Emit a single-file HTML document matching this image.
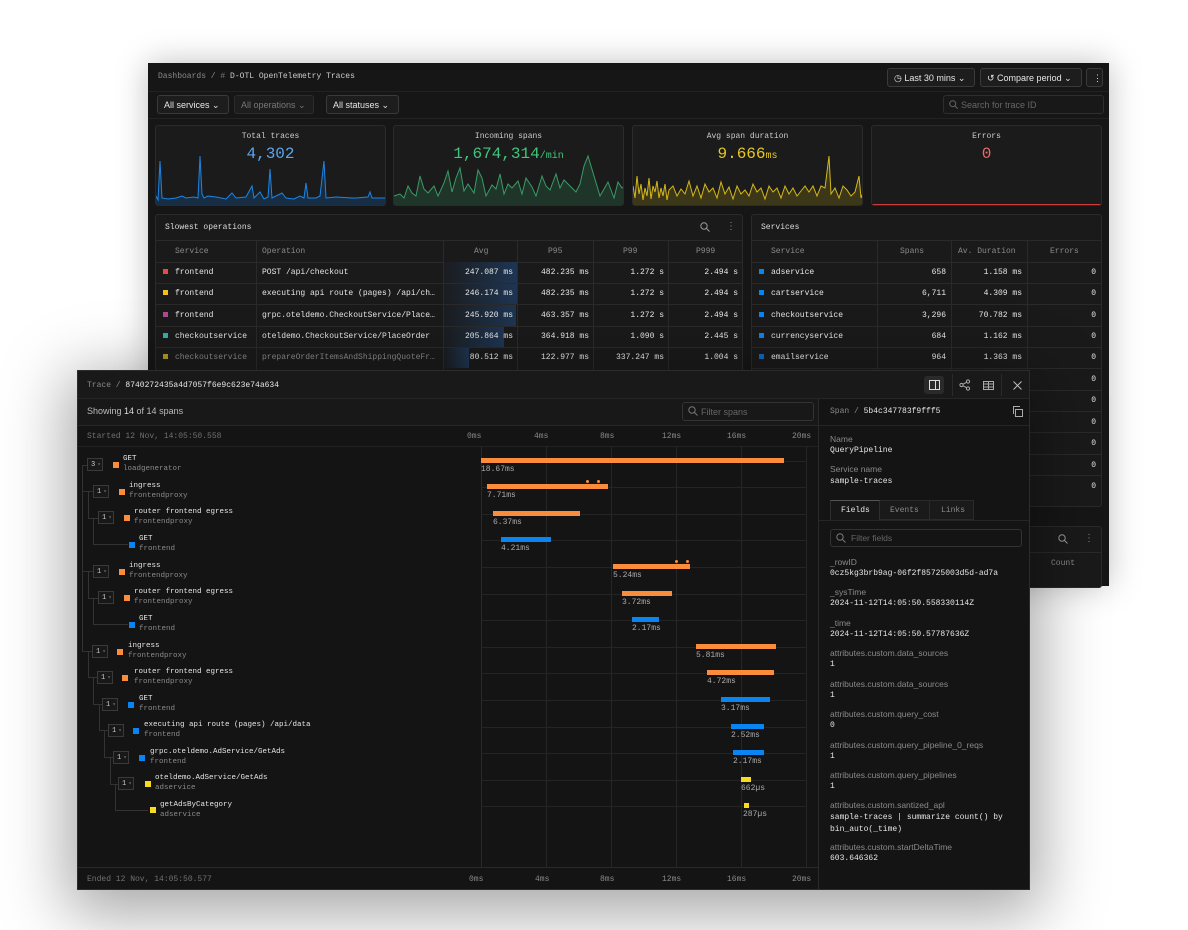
<!DOCTYPE html>
<html><head><meta charset="utf-8">
<style>
*{box-sizing:border-box;margin:0;padding:0}
body{width:1188px;height:930px;background:#fff;position:relative;overflow:hidden;font-family:"Liberation Mono",monospace;color:#d8d8d8}
.a{position:absolute;white-space:nowrap}
.m{font-family:"Liberation Mono",monospace;font-size:8px}
.s{font-family:"Liberation Sans",sans-serif}
.g{color:#8a8a8a}
.w{color:#e6e6e6}
.bk{position:absolute;left:148px;top:63px;width:961px;height:523px;background:#161616;box-shadow:0 0 30px rgba(0,0,0,.25)}
.card{position:absolute;top:125px;height:81px;width:231px;background:#1b1b1b;border:1px solid #2b2b2b;border-radius:3px;overflow:hidden}
.btn{position:absolute;height:19px;border:1px solid #3a3a3a;border-radius:3px;background:#1d1d1d;font-family:"Liberation Sans",sans-serif;font-size:9px;color:#e6e6e6;padding:4px 6px;white-space:nowrap}
.panel{position:absolute;background:#1a1a1a;border:1px solid #2a2a2a;border-radius:3px;overflow:hidden}
.hl{position:absolute;height:1px;background:#2a2a2a}
.vl{position:absolute;width:1px;background:#2a2a2a}
.sq{position:absolute;width:5px;height:5px}
.fg{position:absolute;left:77px;top:370px;width:953px;height:520px;background:#141414;box-shadow:0 14px 60px 10px rgba(0,0,0,.35);border:1px solid #2c2c2c}
.box{position:absolute;width:16px;height:13px;border:1px solid #3a3a3a;background:#181818;font-size:7px;color:#ccc;padding:2px 0 0 3px}
.box:after{content:"▾";color:#666;font-size:6px;margin-left:2px}
.bar{position:absolute;height:5px}
.O{background:#fb8c3c}.B{background:#0a84f0}.Y{background:#f7dc1e}
.tv{position:absolute;width:1px;background:#262626;top:446px;height:422px}
.th{position:absolute;height:1px;background:#242424;left:481px;width:326px}
.ln{position:absolute;background:#333}
</style></head><body>

<div class="bk"></div>
<div class="a m g" style="left:158px;top:72px">Dashboards / <span style="color:#777">#</span> <span class="w" style="color:#ccc">D-OTL OpenTelemetry Traces</span></div>
<div class="btn" style="left:887px;top:68px;width:88px">◷ Last 30 mins ⌄</div>
<div class="btn" style="left:980px;top:68px;width:102px">↺ Compare period ⌄</div>
<div class="btn" style="left:1086px;top:68px;width:17px;padding:4px 6px">⋮</div>
<div class="hl" style="left:148px;top:91px;width:961px;background:#222"></div>
<div class="btn" style="left:157px;top:95px;width:72px">All services ⌄</div>
<div class="btn" style="left:234px;top:95px;width:80px;color:#777;border-color:#2c2c2c">All operations ⌄</div>
<div class="btn" style="left:326px;top:95px;width:73px">All statuses ⌄</div>
<div class="btn" style="left:943px;top:95px;width:161px;color:#666;border-color:#2e2e2e;background:#181818;padding-left:17px">Search for trace ID</div>
<svg class="a" style="left:949px;top:100px" width="9" height="9" fill="none" stroke="#666"><circle cx="3.7" cy="3.7" r="3"/><path d="M6 6L8.7 8.7"/></svg>
<div class="hl" style="left:148px;top:118px;width:961px;background:#222"></div>

<div class="card" style="left:155px">
 <div class="a m w" style="left:0;width:229px;text-align:center;top:6px;color:#ccc">Total traces</div>
 <div class="a m" style="left:0;width:229px;text-align:center;top:19px;font-size:16px;color:#5aa6ee">4,302</div>
 <svg class="a" style="left:0;top:0" width="231" height="81" viewBox="0 0 231 81"><polygon fill="rgba(10,120,230,.2)" points="0,81 0,70 2,74 4,35 6,72 12,73 20,72 26,70 30,72 38,71 42,72 44,30 46,68 48,72 52,70 60,71 70,73 76,67 80,72 90,71 96,60 98,72 104,66 108,73 112,71 114,43 116,72 126,67 130,72 138,73 144,70 148,72 150,57 152,72 160,72 164,70 168,35 170,72 180,71 196,72 200,72 212,71 214,66 216,72 231,72 231,81"/><polyline fill="none" stroke="#1b86e8" stroke-width="1" points="0,70 2,74 4,35 6,72 12,73 20,72 26,70 30,72 38,71 42,72 44,30 46,68 48,72 52,70 60,71 70,73 76,67 80,72 90,71 96,60 98,72 104,66 108,73 112,71 114,43 116,72 126,67 130,72 138,73 144,70 148,72 150,57 152,72 160,72 164,70 168,35 170,72 180,71 196,72 200,72 212,71 214,66 216,72 231,72"/></svg>
</div>
<div class="card" style="left:393px">
 <div class="a m" style="left:0;width:229px;text-align:center;top:6px;color:#ccc">Incoming spans</div>
 <div class="a m" style="left:0;width:229px;text-align:center;top:19px;font-size:16px;color:#3ec77a">1,674,314<span style="font-size:10px">/min</span></div>
 <svg class="a" style="left:0;top:0" width="231" height="81" viewBox="0 0 231 81"><polygon fill="rgba(50,160,100,.2)" points="0,81 0,70 6,68 10,72 14,60 18,67 22,70 26,50 30,63 34,67 40,60 44,70 50,57 54,45 58,66 62,52 66,42 70,65 74,58 80,67 84,44 88,52 92,70 98,59 102,63 106,48 110,68 114,58 118,62 124,55 128,68 132,52 138,61 142,70 148,50 152,60 156,64 162,48 166,62 170,54 176,60 182,66 186,58 190,40 194,30 200,50 206,70 210,63 214,56 220,72 224,56 228,62 231,60 231,81"/><polyline fill="none" stroke="#3a9b66" stroke-width="1" points="0,70 6,68 10,72 14,60 18,67 22,70 26,50 30,63 34,67 40,60 44,70 50,57 54,45 58,66 62,52 66,42 70,65 74,58 80,67 84,44 88,52 92,70 98,59 102,63 106,48 110,68 114,58 118,62 124,55 128,68 132,52 138,61 142,70 148,50 152,60 156,64 162,48 166,62 170,54 176,60 182,66 186,58 190,40 194,30 200,50 206,70 210,63 214,56 220,72 224,56 228,62 231,60"/></svg>
</div>
<div class="card" style="left:632px">
 <div class="a m" style="left:0;width:229px;text-align:center;top:6px;color:#ccc">Avg span duration</div>
 <div class="a m" style="left:0;width:229px;text-align:center;top:19px;font-size:16px;color:#e8c820">9.666<span style="font-size:10px">ms</span></div>
 <svg class="a" style="left:0;top:0" width="231" height="81" viewBox="0 0 231 81"><polygon fill="rgba(200,170,20,.2)" points="0,81 0,60 2,72 4,50 6,68 8,58 10,74 12,62 14,70 16,52 18,73 20,60 22,66 24,55 26,72 28,62 30,70 32,58 34,74 36,64 40,60 44,70 48,63 52,68 56,55 60,70 64,60 68,72 72,58 76,66 80,62 84,72 88,56 92,68 96,61 100,73 104,60 108,68 112,64 116,70 120,58 124,66 128,62 132,73 136,60 140,66 144,62 148,72 152,60 156,68 160,62 164,70 168,65 172,60 176,66 180,60 184,70 188,60 192,62 196,30 198,68 202,62 206,72 210,60 214,64 218,70 222,66 226,50 228,72 231,64 231,81"/><polyline fill="none" stroke="#d4b81c" stroke-width="1" points="0,60 2,72 4,50 6,68 8,58 10,74 12,62 14,70 16,52 18,73 20,60 22,66 24,55 26,72 28,62 30,70 32,58 34,74 36,64 40,60 44,70 48,63 52,68 56,55 60,70 64,60 68,72 72,58 76,66 80,62 84,72 88,56 92,68 96,61 100,73 104,60 108,68 112,64 116,70 120,58 124,66 128,62 132,73 136,60 140,66 144,62 148,72 152,60 156,68 160,62 164,70 168,65 172,60 176,66 180,60 184,70 188,60 192,62 196,30 198,68 202,62 206,72 210,60 214,64 218,70 222,66 226,50 228,72 231,64"/></svg>
</div>
<div class="card" style="left:871px">
 <div class="a m" style="left:0;width:229px;text-align:center;top:6px;color:#ccc">Errors</div>
 <div class="a m" style="left:0;width:229px;text-align:center;top:19px;font-size:16px;color:#ef6a6a">0</div>
 <div class="a" style="left:0;top:78px;width:231px;height:2px;background:#d23a3a"></div>
</div>

<div class="panel" style="left:155px;top:214px;width:588px;height:160px"></div>
<div class="a m w" style="left:165px;top:223px;color:#ddd">Slowest operations</div>
<svg class="a" style="left:700px;top:222px" width="10" height="10" fill="none" stroke="#999"><circle cx="4" cy="4" r="3.2"/><path d="M6.4 6.4L9.5 9.5"/></svg>
<div class="a m g" style="left:726px;top:221px;font-size:10px">⋮</div>
<div class="hl" style="left:156px;top:240px;width:586px"></div>
<div class="hl" style="left:156px;top:262px;width:586px"></div>
<div class="vl" style="left:256px;top:240px;height:130px"></div>
<div class="vl" style="left:443px;top:240px;height:130px"></div>
<div class="vl" style="left:517px;top:240px;height:130px"></div>
<div class="vl" style="left:593px;top:240px;height:130px"></div>
<div class="vl" style="left:668px;top:240px;height:130px"></div>
<div class="a m g" style="left:175px;top:247px">Service</div>
<div class="a m g" style="left:262px;top:247px">Operation</div>
<div class="a m g" style="left:474px;top:247px">Avg</div>
<div class="a m g" style="left:548px;top:247px">P95</div>
<div class="a m g" style="left:623px;top:247px">P99</div>
<div class="a m g" style="left:696px;top:247px">P999</div>
<div class="a" style="left:444px;top:262px;width:73px;height:21px;background:linear-gradient(90deg,#1b1d20,#1e3552)"></div>
<div class="a" style="left:444px;top:283px;width:73px;height:21px;background:linear-gradient(90deg,#1b1d20,#1e3552)"></div>
<div class="a" style="left:444px;top:304px;width:72px;height:22px;background:linear-gradient(90deg,#1b1d20,#1e3552)"></div>
<div class="a" style="left:444px;top:326px;width:60px;height:21px;background:linear-gradient(90deg,#1b1d20,#1e3552)"></div>
<div class="a" style="left:444px;top:347px;width:25px;height:21px;background:linear-gradient(90deg,#1b1d20,#1e3552)"></div>
<div class="hl" style="left:156px;top:283px;width:586px"></div>
<div class="hl" style="left:156px;top:304px;width:586px"></div>
<div class="hl" style="left:156px;top:326px;width:586px"></div>
<div class="hl" style="left:156px;top:347px;width:586px"></div>
<div class="sq" style="left:163px;top:269px;background:#e84a4a"></div>
<div class="sq" style="left:163px;top:290px;background:#f0c020"></div>
<div class="sq" style="left:163px;top:312px;background:#b04890"></div>
<div class="sq" style="left:163px;top:333px;background:#30b0b0"></div>
<div class="sq" style="left:163px;top:354px;background:#b09a20"></div>
<div class="a m w" style="left:175px;top:268px">frontend</div>
<div class="a m w" style="left:175px;top:289px">frontend</div>
<div class="a m w" style="left:175px;top:311px">frontend</div>
<div class="a m w" style="left:175px;top:332px">checkoutservice</div>
<div class="a m g" style="left:175px;top:353px">checkoutservice</div>
<div class="a m w" style="left:262px;top:268px">POST /api/checkout</div>
<div class="a m w" style="left:262px;top:289px">executing api route (pages) /api/ch…</div>
<div class="a m w" style="left:262px;top:311px">grpc.oteldemo.CheckoutService/Place…</div>
<div class="a m w" style="left:262px;top:332px">oteldemo.CheckoutService/PlaceOrder</div>
<div class="a m g" style="left:262px;top:353px">prepareOrderItemsAndShippingQuoteFr…</div>
<div class="a m w" style="left:444px;width:69px;text-align:right;top:268px">247.087 ms</div>
<div class="a m w" style="left:444px;width:69px;text-align:right;top:289px">246.174 ms</div>
<div class="a m w" style="left:444px;width:69px;text-align:right;top:311px">245.920 ms</div>
<div class="a m w" style="left:444px;width:69px;text-align:right;top:332px">205.864 ms</div>
<div class="a m w" style="left:444px;width:69px;text-align:right;top:353px">80.512 ms</div>
<div class="a m w" style="left:518px;width:71px;text-align:right;top:268px">482.235 ms</div>
<div class="a m w" style="left:518px;width:71px;text-align:right;top:289px">482.235 ms</div>
<div class="a m w" style="left:518px;width:71px;text-align:right;top:311px">463.357 ms</div>
<div class="a m w" style="left:518px;width:71px;text-align:right;top:332px">364.918 ms</div>
<div class="a m w" style="left:518px;width:71px;text-align:right;top:353px">122.977 ms</div>
<div class="a m w" style="left:594px;width:70px;text-align:right;top:268px">1.272 s</div>
<div class="a m w" style="left:594px;width:70px;text-align:right;top:289px">1.272 s</div>
<div class="a m w" style="left:594px;width:70px;text-align:right;top:311px">1.272 s</div>
<div class="a m w" style="left:594px;width:70px;text-align:right;top:332px">1.090 s</div>
<div class="a m w" style="left:594px;width:70px;text-align:right;top:353px">337.247 ms</div>
<div class="a m w" style="left:669px;width:69px;text-align:right;top:268px">2.494 s</div>
<div class="a m w" style="left:669px;width:69px;text-align:right;top:289px">2.494 s</div>
<div class="a m w" style="left:669px;width:69px;text-align:right;top:311px">2.494 s</div>
<div class="a m w" style="left:669px;width:69px;text-align:right;top:332px">2.445 s</div>
<div class="a m w" style="left:669px;width:69px;text-align:right;top:353px">1.004 s</div>

<div class="panel" style="left:751px;top:214px;width:351px;height:293px"></div>
<div class="a m w" style="left:761px;top:223px;color:#ddd">Services</div>
<div class="hl" style="left:752px;top:240px;width:349px"></div>
<div class="hl" style="left:752px;top:262px;width:349px"></div>
<div class="vl" style="left:877px;top:240px;height:267px"></div>
<div class="vl" style="left:951px;top:240px;height:267px"></div>
<div class="vl" style="left:1027px;top:240px;height:267px"></div>
<div class="a m g" style="left:771px;top:247px">Service</div>
<div class="a m g" style="left:900px;top:247px">Spans</div>
<div class="a m g" style="left:958px;top:247px">Av. Duration</div>
<div class="a m g" style="left:1050px;top:247px">Errors</div>
<div class="hl" style="left:752px;top:283px;width:349px"></div>
<div class="hl" style="left:752px;top:304px;width:349px"></div>
<div class="hl" style="left:752px;top:326px;width:349px"></div>
<div class="hl" style="left:752px;top:347px;width:349px"></div>
<div class="hl" style="left:752px;top:368px;width:349px"></div>
<div class="hl" style="left:752px;top:390px;width:349px"></div>
<div class="hl" style="left:752px;top:411px;width:349px"></div>
<div class="hl" style="left:752px;top:432px;width:349px"></div>
<div class="hl" style="left:752px;top:454px;width:349px"></div>
<div class="hl" style="left:752px;top:475px;width:349px"></div>
<div class="sq" style="left:759px;top:269px;background:#0a84f0"></div>
<div class="sq" style="left:759px;top:290px;background:#0a84f0"></div>
<div class="sq" style="left:759px;top:312px;background:#0a84f0"></div>
<div class="sq" style="left:759px;top:333px;background:#0a84f0"></div>
<div class="sq" style="left:759px;top:354px;background:#0a6ac0"></div>
<div class="a m w" style="left:771px;top:268px">adservice</div>
<div class="a m w" style="left:771px;top:289px">cartservice</div>
<div class="a m w" style="left:771px;top:311px">checkoutservice</div>
<div class="a m w" style="left:771px;top:332px">currencyservice</div>
<div class="a m w" style="left:771px;top:353px">emailservice</div>
<div class="a m w" style="left:878px;width:68px;text-align:right;top:268px">658</div>
<div class="a m w" style="left:878px;width:68px;text-align:right;top:289px">6,711</div>
<div class="a m w" style="left:878px;width:68px;text-align:right;top:311px">3,296</div>
<div class="a m w" style="left:878px;width:68px;text-align:right;top:332px">684</div>
<div class="a m w" style="left:878px;width:68px;text-align:right;top:353px">964</div>
<div class="a m w" style="left:952px;width:70px;text-align:right;top:268px">1.158 ms</div>
<div class="a m w" style="left:952px;width:70px;text-align:right;top:289px">4.309 ms</div>
<div class="a m w" style="left:952px;width:70px;text-align:right;top:311px">70.782 ms</div>
<div class="a m w" style="left:952px;width:70px;text-align:right;top:332px">1.162 ms</div>
<div class="a m w" style="left:952px;width:70px;text-align:right;top:353px">1.363 ms</div>
<div class="a m w" style="left:1028px;width:68px;text-align:right;top:268px">0</div>
<div class="a m w" style="left:1028px;width:68px;text-align:right;top:289px">0</div>
<div class="a m w" style="left:1028px;width:68px;text-align:right;top:311px">0</div>
<div class="a m w" style="left:1028px;width:68px;text-align:right;top:332px">0</div>
<div class="a m w" style="left:1028px;width:68px;text-align:right;top:353px">0</div>
<div class="a m w" style="left:1028px;width:68px;text-align:right;top:375px">0</div>
<div class="a m w" style="left:1028px;width:68px;text-align:right;top:396px">0</div>
<div class="a m w" style="left:1028px;width:68px;text-align:right;top:418px">0</div>
<div class="a m w" style="left:1028px;width:68px;text-align:right;top:439px">0</div>
<div class="a m w" style="left:1028px;width:68px;text-align:right;top:461px">0</div>
<div class="a m w" style="left:1028px;width:68px;text-align:right;top:482px">0</div>
<div class="panel" style="left:751px;top:526px;width:351px;height:62px"></div>
<svg class="a" style="left:1058px;top:534px" width="10" height="10" fill="none" stroke="#999"><circle cx="4" cy="4" r="3.2"/><path d="M6.4 6.4L9.5 9.5"/></svg>
<div class="a m g" style="left:1084px;top:533px;font-size:10px">⋮</div>
<div class="hl" style="left:752px;top:552px;width:349px"></div>
<div class="a m g" style="left:1051px;top:559px">Count</div>

<div class="fg"></div>
<div class="a" style="left:78px;top:371px;width:951px;height:28px;background:#191919"></div>
<div class="hl" style="left:78px;top:398px;width:951px;background:#262626"></div>
<div class="a m g" style="left:87px;top:381px">Trace / <span class="w">8740272435a4d7057f6e9c623e74a634</span></div>
<div class="a" style="left:924px;top:376px;width:20px;height:18px;background:#2a2a2a;border-radius:3px"></div>
<svg class="a" style="left:929px;top:380px" width="11" height="10"><rect x="0.5" y="0.5" width="10" height="9" fill="none" stroke="#ddd"/><line x1="6.5" y1="0" x2="6.5" y2="10" stroke="#ddd"/></svg>
<svg class="a" style="left:959px;top:379px" width="12" height="12" fill="none" stroke="#aaa"><circle cx="2.5" cy="6" r="1.6"/><circle cx="9" cy="2.5" r="1.6"/><circle cx="9" cy="9.5" r="1.6"/><path d="M4 5.2L7.5 3.3M4 6.8L7.5 8.7"/></svg>
<svg class="a" style="left:983px;top:381px" width="11" height="9" fill="none" stroke="#aaa"><rect x="0.5" y="0.5" width="10" height="8"/><path d="M5.5 0v9M0 3h11M0 6h11"/></svg>
<svg class="a" style="left:1013px;top:381px" width="9" height="9" stroke="#bbb"><path d="M0.5 0.5l8 8M8.5 0.5l-8 8"/></svg>
<div class="vl" style="left:952px;top:374px;height:22px;background:#2a2a2a"></div>
<div class="vl" style="left:1001px;top:374px;height:22px;background:#2a2a2a"></div>

<div class="vl" style="left:818px;top:399px;height:490px;background:#2a2a2a"></div>
<div class="a" style="left:78px;top:399px;width:740px;height:26px;background:#181818"></div>
<div class="a s" style="left:87px;top:406px;font-size:9px;color:#bbb">Showing <b style="color:#ddd;font-weight:normal">14</b> of 14 spans</div>
<div class="a s" style="left:682px;top:402px;width:132px;height:19px;border:1px solid #333;border-radius:3px;font-size:9px;color:#666;padding:4px 0 0 18px">Filter spans</div>
<svg class="a" style="left:688px;top:406px" width="10" height="10" fill="none" stroke="#777"><circle cx="4" cy="4" r="3.2"/><path d="M6.4 6.4L9.5 9.5"/></svg>
<div class="hl" style="left:78px;top:425px;width:740px;background:#262626"></div>
<div class="a m g" style="left:87px;top:432px;color:#707070">Started 12 Nov, 14:05:50.558</div>
<div class="a m g" style="left:467px;top:432px">0ms</div>
<div class="a m g" style="left:534px;top:432px">4ms</div>
<div class="a m g" style="left:600px;top:432px">8ms</div>
<div class="a m g" style="left:662px;top:432px">12ms</div>
<div class="a m g" style="left:727px;top:432px">16ms</div>
<div class="a m g" style="left:792px;top:432px">20ms</div>
<div class="hl" style="left:78px;top:446px;width:740px;background:#222"></div>

<div class="tv" style="left:481px;background:#2a2a2a"></div>
<div class="tv" style="left:546px"></div>
<div class="tv" style="left:611px"></div>
<div class="tv" style="left:676px"></div>
<div class="tv" style="left:741px"></div>
<div class="tv" style="left:806px"></div>

<div class="th" style="top:461px"></div><div class="th" style="top:487px"></div><div class="th" style="top:514px"></div><div class="th" style="top:540px"></div><div class="th" style="top:567px"></div><div class="th" style="top:594px"></div><div class="th" style="top:620px"></div><div class="th" style="top:647px"></div><div class="th" style="top:673px"></div><div class="th" style="top:700px"></div><div class="th" style="top:727px"></div><div class="th" style="top:753px"></div><div class="th" style="top:780px"></div><div class="th" style="top:806px"></div>

<div class="ln" style="left:82px;top:465px;width:1px;height:187px"></div>
<div class="ln" style="left:82px;top:465px;width:5px;height:1px"></div>
<div class="ln" style="left:82px;top:491px;width:11px;height:1px"></div>
<div class="ln" style="left:82px;top:571px;width:11px;height:1px"></div>
<div class="ln" style="left:82px;top:651px;width:11px;height:1px"></div>
<div class="ln" style="left:88px;top:491px;width:1px;height:27px"></div>
<div class="ln" style="left:88px;top:518px;width:10px;height:1px"></div>
<div class="ln" style="left:93px;top:518px;width:1px;height:27px"></div>
<div class="ln" style="left:93px;top:544px;width:35px;height:1px"></div>
<div class="ln" style="left:88px;top:571px;width:1px;height:27px"></div>
<div class="ln" style="left:88px;top:598px;width:10px;height:1px"></div>
<div class="ln" style="left:93px;top:598px;width:1px;height:27px"></div>
<div class="ln" style="left:93px;top:624px;width:35px;height:1px"></div>
<div class="ln" style="left:88px;top:651px;width:1px;height:27px"></div>
<div class="ln" style="left:88px;top:677px;width:9px;height:1px"></div>
<div class="ln" style="left:93px;top:677px;width:1px;height:27px"></div>
<div class="ln" style="left:93px;top:704px;width:9px;height:1px"></div>
<div class="ln" style="left:99px;top:704px;width:1px;height:27px"></div>
<div class="ln" style="left:99px;top:730px;width:9px;height:1px"></div>
<div class="ln" style="left:104px;top:730px;width:1px;height:27px"></div>
<div class="ln" style="left:104px;top:757px;width:9px;height:1px"></div>
<div class="ln" style="left:110px;top:757px;width:1px;height:27px"></div>
<div class="ln" style="left:110px;top:784px;width:8px;height:1px"></div>
<div class="ln" style="left:115px;top:784px;width:1px;height:26px"></div>
<div class="ln" style="left:115px;top:810px;width:33px;height:1px"></div>

<div class="box" style="left:87px;top:458px">3</div><div class="sq O" style="left:113px;top:462px;width:6px;height:6px"></div>
<div class="a m w" style="left:123px;top:455px;font-size:7.5px">GET</div><div class="a m g" style="left:123px;top:465px;font-size:7.5px">loadgenerator</div>
<div class="box" style="left:93px;top:485px">1</div><div class="sq O" style="left:119px;top:489px;width:6px;height:6px"></div>
<div class="a m w" style="left:129px;top:482px;font-size:7.5px">ingress</div><div class="a m g" style="left:129px;top:492px;font-size:7.5px">frontendproxy</div>
<div class="box" style="left:98px;top:511px">1</div><div class="sq O" style="left:124px;top:515px;width:6px;height:6px"></div>
<div class="a m w" style="left:134px;top:508px;font-size:7.5px">router frontend egress</div><div class="a m g" style="left:134px;top:518px;font-size:7.5px">frontendproxy</div>
<div class="sq B" style="left:129px;top:542px;width:6px;height:6px"></div>
<div class="a m w" style="left:139px;top:535px;font-size:7.5px">GET</div><div class="a m g" style="left:139px;top:545px;font-size:7.5px">frontend</div>
<div class="box" style="left:93px;top:565px">1</div><div class="sq O" style="left:119px;top:569px;width:6px;height:6px"></div>
<div class="a m w" style="left:129px;top:562px;font-size:7.5px">ingress</div><div class="a m g" style="left:129px;top:572px;font-size:7.5px">frontendproxy</div>
<div class="box" style="left:98px;top:591px">1</div><div class="sq O" style="left:124px;top:595px;width:6px;height:6px"></div>
<div class="a m w" style="left:134px;top:588px;font-size:7.5px">router frontend egress</div><div class="a m g" style="left:134px;top:598px;font-size:7.5px">frontendproxy</div>
<div class="sq B" style="left:129px;top:622px;width:6px;height:6px"></div>
<div class="a m w" style="left:139px;top:615px;font-size:7.5px">GET</div><div class="a m g" style="left:139px;top:625px;font-size:7.5px">frontend</div>
<div class="box" style="left:92px;top:645px">1</div><div class="sq O" style="left:117px;top:649px;width:6px;height:6px"></div>
<div class="a m w" style="left:128px;top:642px;font-size:7.5px">ingress</div><div class="a m g" style="left:128px;top:652px;font-size:7.5px">frontendproxy</div>
<div class="box" style="left:97px;top:671px">1</div><div class="sq O" style="left:122px;top:675px;width:6px;height:6px"></div>
<div class="a m w" style="left:134px;top:668px;font-size:7.5px">router frontend egress</div><div class="a m g" style="left:134px;top:678px;font-size:7.5px">frontendproxy</div>
<div class="box" style="left:102px;top:698px">1</div><div class="sq B" style="left:128px;top:702px;width:6px;height:6px"></div>
<div class="a m w" style="left:139px;top:695px;font-size:7.5px">GET</div><div class="a m g" style="left:139px;top:705px;font-size:7.5px">frontend</div>
<div class="box" style="left:108px;top:724px">1</div><div class="sq B" style="left:133px;top:728px;width:6px;height:6px"></div>
<div class="a m w" style="left:144px;top:721px;font-size:7.5px">executing api route (pages) /api/data</div><div class="a m g" style="left:144px;top:731px;font-size:7.5px">frontend</div>
<div class="box" style="left:113px;top:751px">1</div><div class="sq B" style="left:139px;top:755px;width:6px;height:6px"></div>
<div class="a m w" style="left:150px;top:748px;font-size:7.5px">grpc.oteldemo.AdService/GetAds</div><div class="a m g" style="left:150px;top:758px;font-size:7.5px">frontend</div>
<div class="box" style="left:118px;top:777px">1</div><div class="sq Y" style="left:145px;top:781px;width:6px;height:6px"></div>
<div class="a m w" style="left:155px;top:774px;font-size:7.5px">oteldemo.AdService/GetAds</div><div class="a m g" style="left:155px;top:784px;font-size:7.5px">adservice</div>
<div class="sq Y" style="left:150px;top:807px;width:6px;height:6px"></div>
<div class="a m w" style="left:160px;top:801px;font-size:7.5px">getAdsByCategory</div><div class="a m g" style="left:160px;top:811px;font-size:7.5px">adservice</div>

<div class="bar O" style="left:481px;top:458px;width:303px"></div><div class="a m g" style="left:481px;top:465px;color:#aaa">18.67ms</div>
<div class="bar O" style="left:487px;top:484px;width:121px"></div><div class="a m g" style="left:487px;top:491px;color:#aaa">7.71ms</div>
<div class="a" style="left:586px;top:480px;width:3px;height:3px;border-radius:2px;background:#fb8c3c"></div><div class="a" style="left:597px;top:480px;width:3px;height:3px;border-radius:2px;background:#fb8c3c"></div>
<div class="bar O" style="left:493px;top:511px;width:87px"></div><div class="a m g" style="left:493px;top:518px;color:#aaa">6.37ms</div>
<div class="bar B" style="left:501px;top:537px;width:50px"></div><div class="a m g" style="left:501px;top:544px;color:#aaa">4.21ms</div>
<div class="bar O" style="left:613px;top:564px;width:77px"></div><div class="a m g" style="left:613px;top:571px;color:#aaa">5.24ms</div>
<div class="a" style="left:675px;top:560px;width:3px;height:3px;border-radius:2px;background:#fb8c3c"></div><div class="a" style="left:686px;top:560px;width:3px;height:3px;border-radius:2px;background:#fb8c3c"></div>
<div class="bar O" style="left:622px;top:591px;width:50px"></div><div class="a m g" style="left:622px;top:598px;color:#aaa">3.72ms</div>
<div class="bar B" style="left:632px;top:617px;width:27px"></div><div class="a m g" style="left:632px;top:624px;color:#aaa">2.17ms</div>
<div class="bar O" style="left:696px;top:644px;width:80px"></div><div class="a m g" style="left:696px;top:651px;color:#aaa">5.81ms</div>
<div class="bar O" style="left:707px;top:670px;width:67px"></div><div class="a m g" style="left:707px;top:677px;color:#aaa">4.72ms</div>
<div class="bar B" style="left:721px;top:697px;width:49px"></div><div class="a m g" style="left:721px;top:704px;color:#aaa">3.17ms</div>
<div class="bar B" style="left:731px;top:724px;width:33px"></div><div class="a m g" style="left:731px;top:731px;color:#aaa">2.52ms</div>
<div class="bar B" style="left:733px;top:750px;width:31px"></div><div class="a m g" style="left:733px;top:757px;color:#aaa">2.17ms</div>
<div class="bar Y" style="left:741px;top:777px;width:10px"></div><div class="a m g" style="left:741px;top:784px;color:#aaa">662µs</div>
<div class="bar Y" style="left:744px;top:803px;width:5px"></div><div class="a m g" style="left:743px;top:810px;color:#aaa">287µs</div>

<div class="hl" style="left:78px;top:867px;width:740px;background:#2a2a2a"></div>
<div class="a m" style="left:87px;top:875px;color:#707070">Ended 12 Nov, 14:05:50.577</div>
<div class="a m g" style="left:469px;top:875px">0ms</div>
<div class="a m g" style="left:535px;top:875px">4ms</div>
<div class="a m g" style="left:600px;top:875px">8ms</div>
<div class="a m g" style="left:662px;top:875px">12ms</div>
<div class="a m g" style="left:727px;top:875px">16ms</div>
<div class="a m g" style="left:792px;top:875px">20ms</div>

<div class="a m g" style="left:830px;top:407px">Span / <span class="w">5b4c347783f9fff5</span></div>
<svg class="a" style="left:1013px;top:406px" width="10" height="11" fill="none" stroke="#aaa"><rect x="2.5" y="3.5" width="7" height="7"/><path d="M0.5 8V0.5H7"/></svg>
<div class="hl" style="left:819px;top:425px;width:210px;background:#262626"></div>
<div class="a s g" style="left:830px;top:434px;font-size:8.5px">Name</div>
<div class="a m w" style="left:830px;top:446px">QueryPipeline</div>
<div class="a s g" style="left:830px;top:464px;font-size:8.5px">Service name</div>
<div class="a m w" style="left:830px;top:477px">sample-traces</div>
<div class="a" style="left:830px;top:500px;width:50px;height:20px;border:1px solid #2e2e2e;border-bottom:none;border-top:1px solid #555;background:#171717"></div>
<div class="a" style="left:880px;top:500px;width:50px;height:20px;border:1px solid #2a2a2a;border-left:none;background:#1a1a1a"></div>
<div class="a" style="left:930px;top:500px;width:44px;height:20px;border:1px solid #2a2a2a;border-left:none;background:#1a1a1a"></div>
<div class="a m w" style="left:841px;top:506px">Fields</div>
<div class="a m g" style="left:890px;top:506px">Events</div>
<div class="a m g" style="left:941px;top:506px">Links</div>
<div class="hl" style="left:819px;top:520px;width:210px;background:#262626"></div>
<div class="a s" style="left:830px;top:529px;width:192px;height:18px;border:1px solid #333;border-radius:3px;font-size:8.5px;color:#666;padding:3px 0 0 20px">Filter fields</div>
<svg class="a" style="left:836px;top:533px" width="10" height="10" fill="none" stroke="#777"><circle cx="4" cy="4" r="3.2"/><path d="M6.4 6.4L9.5 9.5"/></svg>
<div class="a s g" style="left:830px;top:557px;font-size:8.5px">_rowID</div>
<div class="a m w" style="left:830px;top:569px">0cz5kg3brb9ag-06f2f85725003d5d-ad7a</div>
<div class="a s g" style="left:830px;top:587px;font-size:8.5px">_sysTime</div>
<div class="a m w" style="left:830px;top:599px">2024-11-12T14:05:50.558330114Z</div>
<div class="a s g" style="left:830px;top:618px;font-size:8.5px">_time</div>
<div class="a m w" style="left:830px;top:630px">2024-11-12T14:05:50.57787636Z</div>
<div class="a s g" style="left:830px;top:648px;font-size:8.5px">attributes.custom.data_sources</div>
<div class="a m w" style="left:830px;top:660px">1</div>
<div class="a s g" style="left:830px;top:679px;font-size:8.5px">attributes.custom.data_sources</div>
<div class="a m w" style="left:830px;top:691px">1</div>
<div class="a s g" style="left:830px;top:709px;font-size:8.5px">attributes.custom.query_cost</div>
<div class="a m w" style="left:830px;top:721px">0</div>
<div class="a s g" style="left:830px;top:740px;font-size:8.5px">attributes.custom.query_pipeline_0_reqs</div>
<div class="a m w" style="left:830px;top:752px">1</div>
<div class="a s g" style="left:830px;top:770px;font-size:8.5px">attributes.custom.query_pipelines</div>
<div class="a m w" style="left:830px;top:782px">1</div>
<div class="a s g" style="left:830px;top:800px;font-size:8.5px">attributes.custom.santized_apl</div>
<div class="a m w" style="left:830px;top:813px">sample-traces | summarize count() by</div>
<div class="a m w" style="left:830px;top:825px">bin_auto(_time)</div>
<div class="a s g" style="left:830px;top:842px;font-size:8.5px">attributes.custom.startDeltaTime</div>
<div class="a m w" style="left:830px;top:854px">603.646362</div>
</body></html>
